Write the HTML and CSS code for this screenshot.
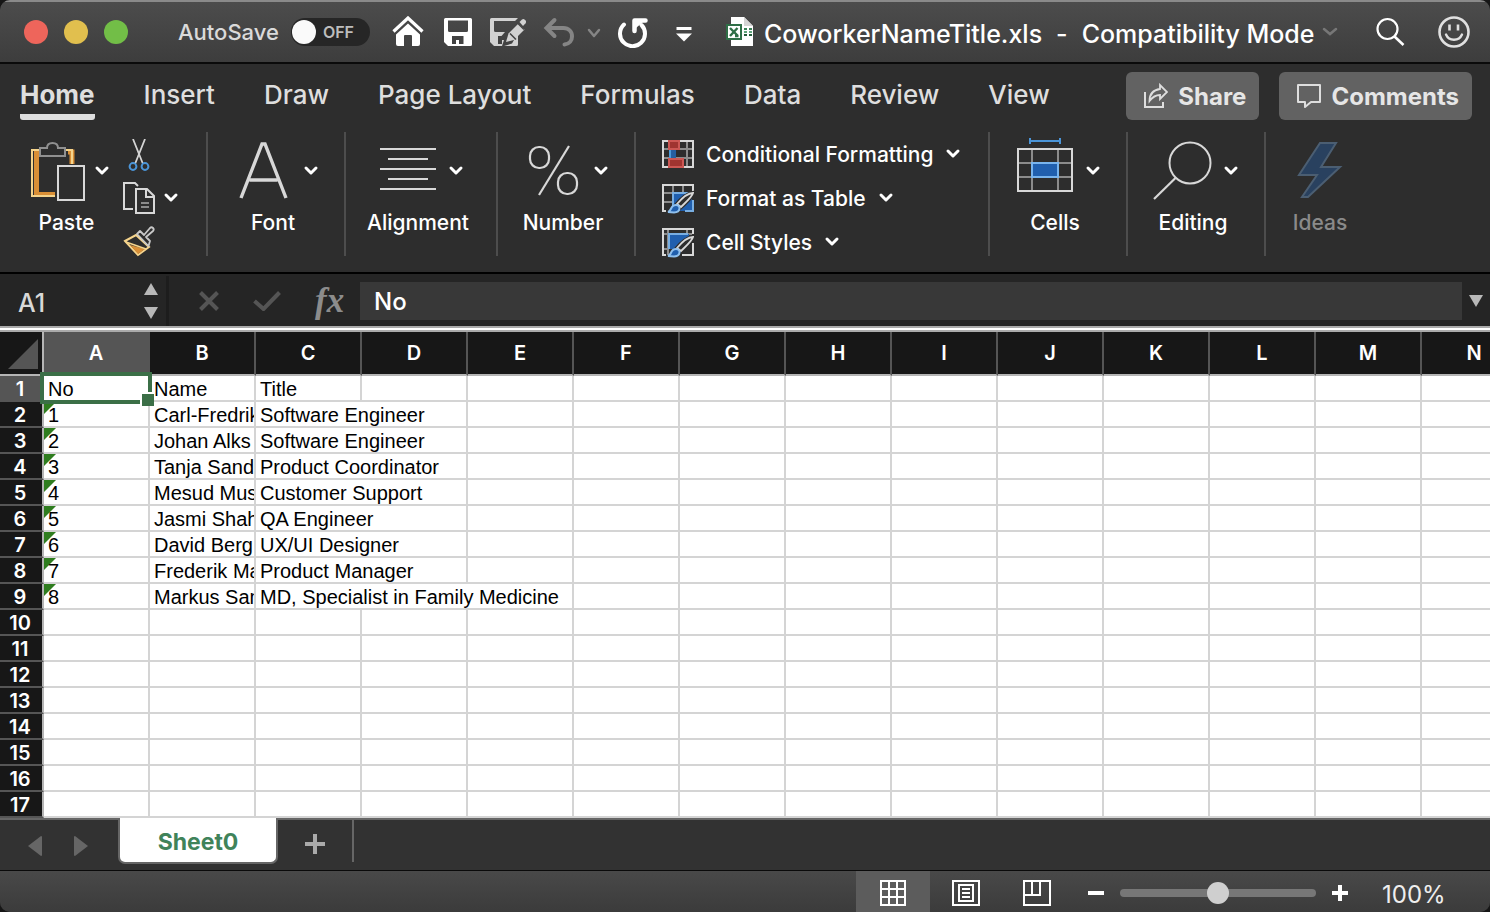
FILE: index.html
```html
<!DOCTYPE html>
<html lang="en">
<head>
<meta charset="utf-8">
<title>CoworkerNameTitle.xls</title>
<link rel="stylesheet" href="styles.css">
</head>
<body>
<div class="window">
  <header class="titlebar">
    <div class="lights">
      <button class="light close" aria-label="Close"></button>
      <button class="light minimize" aria-label="Minimize"></button>
      <button class="light zoom" aria-label="Zoom"></button>
    </div>
    <label class="autosave">AutoSave
      <span class="switch"><input type="checkbox" class="switch-input"><span class="switch-text">OFF</span></span>
    </label>
    <div class="quick">
      <button aria-label="Home"><svg width="32" height="32" viewBox="0 0 32 32"><path d="M1.500 15.500 16 2l14.500 13.500" fill="none" stroke="#fff" stroke-width="3.200"/><path fill-rule="evenodd" d="M16 7.500 28 18.500V28q0 2-2 2h-6V20q0-1-1-1h-6q-1 0-1 1v10H6q-2 0-2-2v-9.500z" fill="#fff"/></svg></button>
      <button aria-label="Save"><svg width="34" height="32" viewBox="0 0 34 32"><path fill="#fff" fill-rule="evenodd" d="M5.500 2h25q1.500 0 1.500 1.500v25q0 1.500-1.500 1.500H8l-4-4V3.500Q4 2 5.500 2zM8 4.500v10q0 1.500 1.500 1.500h17q1.500 0 1.500-1.500v-10zM12 20v8h4v-4h3v4h4.500v-8z"/></svg></button>
      <button aria-label="Save as"><svg width="36" height="32" viewBox="0 0 36 32"><path fill="#d2d2d2" fill-rule="evenodd" d="M1.500 2H28l-3 3H4v9.500Q4 16 5.500 16H15l-3.500 4H8v8h4v-4h2l-2 6H4l-4-4V3.500Q0 2 1.500 2zM28 17v11.500q0 1.500-1.500 1.500H14l8-2.500z"/><path d="M16 26l2.500-8.500L28.500 7.500l6 6L24 24z" fill="#d2d2d2"/><path d="M29.500 6 32 3.500q1.500-1 2.800.2l.8.900q1 1.300 0 2.600L33 10z" fill="#d2d2d2"/><path d="M27 6.500l7 7M20 17.500l6 6" stroke="#454545" stroke-width="1.500" fill="none"/></svg></button>
      <span class="pair">
        <button aria-label="Undo"><svg width="36" height="32" viewBox="0 0 36 32"><path d="M12.500 4 4.500 12l8 8M5 12h16.500c5 0 8.500 3.500 8.500 8.500 0 4-2.500 7.500-7.500 8" fill="none" stroke="#858585" stroke-width="4" stroke-linecap="round"/></svg></button>
        <button aria-label="Undo history"><svg width="16" height="32" viewBox="0 0 16 32"><path d="m3 14 5 6 5-6" fill="none" stroke="#858585" stroke-width="2.500" stroke-linecap="round" stroke-linejoin="round"/></svg></button>
      </span>
      <button aria-label="Redo"><svg width="32" height="32" viewBox="0 0 32 32"><path d="M6 8.500A12.500 12.500 0 1 0 23.500 9" fill="none" stroke="#fff" stroke-width="4" stroke-linecap="round"/><path d="M16.500 15V4.500H27.500" fill="none" stroke="#fff" stroke-width="4.500" stroke-linecap="round" stroke-linejoin="round"/><path d="M17 5h9l-8 7z" fill="#fff"/></svg></button>
      <button aria-label="Customize toolbar"><svg width="36" height="32" viewBox="0 0 36 32"><path d="M10.500 12.500h15" stroke="#fff" stroke-width="3"/><path d="M10 17.500h16l-8 8z" fill="#fff"/></svg></button>
      <svg width="36" height="32" viewBox="0 0 36 32"><path d="M13 1h13l9 9v20H13z" fill="#fff"/><path d="M26 1v9h9z" fill="#d5d5d5"/><path d="M26 12h3v2h-3zM31 12h3v2h-3z" fill="#3a8056"/><path d="M26 15h3v2h-3zM31 15h3v2h-3z" fill="#5fa57b"/><path d="M26 18h3v2h-3zM31 18h3v2h-3z" fill="#245c39"/><path d="M9 9h14v14H9z" fill="#fff" stroke="#2f6f47" stroke-width="2"/><path d="m12 12 8 8M19.500 12 12 20M17 20h3.500" stroke="#2f6f47" stroke-width="2.400"/></svg>
    </div>
    <h1 class="doc"><span>CoworkerNameTitle.xls</span><span>-</span><span>Compatibility Mode</span></h1>
    <svg width="16" height="32" viewBox="0 0 16 32"><path d="m2 13 6 5 6-5" fill="none" stroke="#777" stroke-width="2.500" stroke-linecap="round"/></svg>
    <div class="title-end">
      <button aria-label="Search"><svg width="32" height="32" viewBox="0 0 32 32"><circle cx="12.500" cy="13" r="10" fill="none" stroke="#fff" stroke-width="2.200"/><path d="m19.500 20.500 9 8.500" stroke="#fff" stroke-width="2.600"/></svg></button>
      <button aria-label="Feedback"><svg width="32" height="32" viewBox="0 0 32 32" fill="none" stroke="#e0e0e0"><circle cx="16" cy="16" r="14.500" stroke-width="2.600"/><path d="M11.500 8.500v6M20 8.500v6" stroke-width="2.600"/><path d="M8 18.500c3 7 13 7 16 0" stroke-width="2.400" stroke-linecap="round"/></svg></button>
    </div>
  </header>

  <section class="ribbon">
    <div class="ribbon-top">
      <nav class="tabs">
        <a href="#home" class="tab active">Home</a>
        <a href="#insert" class="tab">Insert</a>
        <a href="#draw" class="tab">Draw</a>
        <a href="#layout" class="tab">Page Layout</a>
        <a href="#formulas" class="tab">Formulas</a>
        <a href="#data" class="tab">Data</a>
        <a href="#review" class="tab">Review</a>
        <a href="#view" class="tab">View</a>
      </nav>
      <div class="actions">
        <button class="action"><svg width="24" height="26" viewBox="0 0 24 26" fill="none" stroke="#dedede" stroke-width="2"><path d="M1 9v15h18v-5"/><path d="M16 2v4C9 7 5.500 11 5.500 18c3-4 6-6 10.500-6v4l7-7z" stroke-width="1.800"/></svg>Share</button>
        <button class="action"><svg width="24" height="26" viewBox="0 0 24 26"><path d="M1 2h22v17H14l-6 5v-5H1z" fill="none" stroke="#dedede" stroke-width="2" stroke-linejoin="round"/></svg>Comments</button>
      </div>
    </div>
    <div class="groups">
      <div class="group clipboard">
        <button class="tool">
          <span class="tool-icons"><svg width="56" height="60" viewBox="0 0 56 60"><path d="M10 10H5.500v42.500H26M37 10h4v12" fill="none" stroke="#d98f36" stroke-width="5"/><path d="M9 8H1v46h25M35 8h6v14" fill="none" stroke="#f5d48c" stroke-width="2"/><path d="M9 6h7c0-3 2-5 5.500-5s5.500 2 5.500 5h7v8H9z" fill="#2d2d2d" stroke="#909090" stroke-width="2"/><path d="M24 22h5v38h-5z" fill="#2d2d2d"/><path d="M27 24h26v34H27z" fill="#2d2d2d" stroke="#d8d8d8" stroke-width="2"/></svg>
          <svg class="chev" width="16" height="12" viewBox="0 0 16 12"><path d="m3 3 5 5 5-5"/></svg></span>
          <span class="tool-label">Paste</span>
        </button>
        <div class="clip-tools">
          <button aria-label="Cut"><svg width="32" height="32" viewBox="0 0 32 32" fill="none"><path d="m10 0 10 25M22 0 12 25" stroke="#d4d4d4" stroke-width="1.800"/><circle cx="10" cy="27.500" r="3.400" stroke="#4b95d8" stroke-width="2"/><circle cx="22" cy="27.500" r="3.400" stroke="#4b95d8" stroke-width="2"/></svg></button>
          <span class="pair"><button aria-label="Copy"><svg width="32" height="34" viewBox="0 0 32 34" fill="none" stroke="#d8d8d8" stroke-width="2"><path d="M10 28H1V2h11l3 3"/><path d="M13 8h11l7 7v17H13z"/><path d="M23 8v8h8"/><path d="M18 22h8M18 26h8" stroke="#aaa" stroke-width="1.600"/></svg></button>
          <button aria-label="Copy options"><svg class="chev" width="16" height="12" viewBox="0 0 16 12"><path d="m3 3 5 5 5-5"/></svg></button></span>
          <button aria-label="Format painter"><svg width="32" height="32" viewBox="0 0 32 32"><path d="m2 16 11-6 13 12-11 8z" fill="#2d2d2d" stroke="#f5d48c" stroke-width="2"/><path d="m7 20 15 4-7 5z" fill="#d98f36"/><path d="m3 17 20 7" stroke="#f5d48c" stroke-width="1.600"/><path d="m14 9 3-3 4 4 6-7q1.500-1.500 3 0t0 3l-7 6 4 4-1.500 5z" fill="#2d2d2d" stroke="#c8c8c8" stroke-width="1.800" stroke-linejoin="round"/></svg></button>
        </div>
      </div>
      <div class="group">
        <button class="tool">
          <span class="tool-icons"><svg width="56" height="60" viewBox="0 0 56 60"><path d="M6 56 27 2h3l21 54M14.500 38h28" fill="none" stroke="#d8d8d8" stroke-width="3.400"/></svg>
          <svg class="chev" width="16" height="12" viewBox="0 0 16 12"><path d="m3 3 5 5 5-5"/></svg></span>
          <span class="tool-label">Font</span>
        </button>
      </div>
      <div class="group wide">
        <button class="tool">
          <span class="tool-icons"><svg width="56" height="60" viewBox="0 0 56 60"><path d="M0 7h56M8 17h40M0 27h56M8 37h40M0 47h56" stroke="#d8d8d8" stroke-width="2"/></svg>
          <svg class="chev" width="16" height="12" viewBox="0 0 16 12"><path d="m3 3 5 5 5-5"/></svg></span>
          <span class="tool-label">Alignment</span>
        </button>
      </div>
      <div class="group">
        <button class="tool">
          <span class="tool-icons"><svg width="56" height="60" viewBox="0 0 56 60" fill="none" stroke="#d8d8d8" stroke-width="2.200"><rect x="5" y="5" width="19" height="21" rx="9"/><rect x="33" y="31" width="19" height="21" rx="9"/><path d="M44 4 14 53"/></svg>
          <svg class="chev" width="16" height="12" viewBox="0 0 16 12"><path d="m3 3 5 5 5-5"/></svg></span>
          <span class="tool-label">Number</span>
        </button>
      </div>
      <div class="group styles">
        <button class="row-tool"><svg width="32" height="32" viewBox="0 0 32 32"><path d="M25 3v26M2 11h28M2 20h28M13 3v26" stroke="#8c8c8c" stroke-width="2"/><path d="M1 3h30v26H1z" fill="none" stroke="#d8d8d8" stroke-width="2"/><path d="M7 12h7v8H7z" fill="#265fa0"/><path d="M7 12h2v8H7z" fill="#4f9bd8"/><path d="M7 3h10v8H7zM7 21h14v8H7z" fill="#a03430" stroke="#cc5753" stroke-width="2"/></svg>Conditional Formatting<svg class="chev" width="16" height="12" viewBox="0 0 16 12"><path d="m3 3 5 5 5-5"/></svg></button>
        <button class="row-tool"><svg width="32" height="32" viewBox="0 0 32 32"><path d="M11 3v8M21 3v8M2 11h9M2 20h9" stroke="#8c8c8c" stroke-width="2"/><path d="M10 10h20v19H10z" fill="#205fae"/><path d="M11 28V11h16M31 18v11h-8" fill="none" stroke="#78aee2" stroke-width="2"/><path d="M4 29H1V3h30v7" fill="none" stroke="#d8d8d8" stroke-width="2"/><path d="M14 23c5-6 10-11 17-12-2 5-7 10-13 15z" fill="#2d2d2d" stroke="#2d2d2d" stroke-width="4"/><path d="M15 22c5-6 10-11 16-11-1 4-7 9-12 14z" fill="#2d2d2d" stroke="#d8d8d8" stroke-width="1.800"/><path d="M6 30c4-1 2-7 8-7 5 0 5 7-2 7.500z" fill="#205fae" stroke="#8fc0ee" stroke-width="2"/></svg>Format as Table<svg class="chev" width="16" height="12" viewBox="0 0 16 12"><path d="m3 3 5 5 5-5"/></svg></button>
        <button class="row-tool"><svg width="32" height="32" viewBox="0 0 32 32"><path d="M6 3v26M25 3v5M2 8h28M2 23h5" stroke="#8c8c8c" stroke-width="2"/><path d="M7 8h20v3L13 23H7z" fill="#205fae"/><path d="M7 23V8h19" fill="none" stroke="#78aee2" stroke-width="2"/><path d="M4 29H1V3h30v5M31 17v12H20" fill="none" stroke="#d8d8d8" stroke-width="2"/><path d="M14 23c5-6 10-11 17-12-2 5-7 10-13 15z" fill="#2d2d2d" stroke="#2d2d2d" stroke-width="4"/><path d="M15 22c5-6 10-11 16-11-1 4-7 9-12 14z" fill="#2d2d2d" stroke="#d8d8d8" stroke-width="1.800"/><path d="M6 30c4-1 2-7 8-7 5 0 5 7-2 7.500z" fill="#205fae" stroke="#8fc0ee" stroke-width="2"/></svg>Cell Styles<svg class="chev" width="16" height="12" viewBox="0 0 16 12"><path d="m3 3 5 5 5-5"/></svg></button>
      </div>
      <div class="group">
        <button class="tool">
          <span class="tool-icons"><svg class="spill" width="56" height="60" viewBox="0 0 56 60"><path d="M13-1h30M13-4v6M43-4v6" stroke="#4b95d8" stroke-width="2"/><path d="M15 8v41M41 8v41M1 21h54M1 35h54" stroke="#8c8c8c" stroke-width="2"/><path d="M1 7h54v42H1z" fill="none" stroke="#d8d8d8" stroke-width="2"/><path d="M15 21h26v14H15z" fill="#205fae" stroke="#78b4ee" stroke-width="2"/></svg>
          <svg class="chev" width="16" height="12" viewBox="0 0 16 12"><path d="m3 3 5 5 5-5"/></svg></span>
          <span class="tool-label">Cells</span>
        </button>
      </div>
      <div class="group">
        <button class="tool">
          <span class="tool-icons"><svg class="spill" width="56" height="60" viewBox="0 0 56 60"><circle cx="35" cy="21" r="20.500" fill="none" stroke="#d8d8d8" stroke-width="2"/><path d="M21 35.500-1 57" stroke="#d8d8d8" stroke-width="2.200"/></svg>
          <svg class="chev" width="16" height="12" viewBox="0 0 16 12"><path d="m3 3 5 5 5-5"/></svg></span>
          <span class="tool-label">Editing</span>
        </button>
      </div>
      <div class="group last">
        <button class="tool" disabled>
          <svg width="56" height="60" viewBox="0 0 56 60"><path d="M28 1h16L29 25h19L16 55H10l15-22H7z" fill="#29415f" stroke="#4b5e72" stroke-width="2"/></svg>
          <span class="tool-label center">Ideas</span>
        </button>
      </div>
    </div>
  </section>

  <section class="formula">
    <div class="namebox">
      <input class="cell-ref" aria-label="Name box" value="A1">
      <span class="steps"><button aria-label="Previous"><svg width="14" height="12" viewBox="0 0 14 12"><path d="m7 0 7 12H0z" fill="#b8b8b8"/></svg></button><button aria-label="Next"><svg width="14" height="12" viewBox="0 0 14 12"><path d="m7 12 7-12H0z" fill="#b8b8b8"/></svg></button></span>
    </div>
    <div class="formula-tools">
      <button aria-label="Cancel"><svg width="20" height="20" viewBox="0 0 20 20"><path d="m1.500 1.500 17 17M18.500 1.500l-17 17" stroke="#555" stroke-width="4"/></svg></button>
      <button aria-label="Enter"><svg width="28" height="20" viewBox="0 0 28 20"><path d="m1.500 10 9 8L26.500 1.500" fill="none" stroke="#555" stroke-width="4"/></svg></button>
      <button class="fx">fx</button>
    </div>
    <input class="formula-input" aria-label="Formula" value="No">
    <button class="expand" aria-label="Expand"><svg width="14" height="12" viewBox="0 0 14 12"><path d="m7 12 7-12H0z" fill="#b8b8b8"/></svg></button>
  </section>

  <main class="sheet">
    <table class="grid">
      <colgroup><col class="num-col"><col span="14" class="data-col"></colgroup>
      <thead><tr><th class="corner" aria-label="Select all"><svg width="30" height="30" viewBox="0 0 30 30"><path d="M30 0v30H0z" fill="#555"/></svg></th><th class="on">A</th><th>B</th><th>C</th><th>D</th><th>E</th><th>F</th><th>G</th><th>H</th><th>I</th><th>J</th><th>K</th><th>L</th><th>M</th><th>N</th></tr></thead>
      <tbody>
      <tr><th class="on">1</th><td class="selected">No</td><td>Name</td><td>Title</td><td><td><td><td><td><td><td><td><td><td><td></tr>
      <tr><th>2</th><td class="flag">1</td><td>Carl-Fredrik</td><td colspan="2">Software Engineer</td><td><td><td><td><td><td><td><td><td><td></tr>
      <tr><th>3</th><td class="flag">2</td><td>Johan Alks</td><td colspan="2">Software Engineer</td><td><td><td><td><td><td><td><td><td><td></tr>
      <tr><th>4</th><td class="flag">3</td><td>Tanja Sand</td><td colspan="2">Product Coordinator</td><td><td><td><td><td><td><td><td><td><td></tr>
      <tr><th>5</th><td class="flag">4</td><td>Mesud Mus</td><td colspan="2">Customer Support</td><td><td><td><td><td><td><td><td><td><td></tr>
      <tr><th>6</th><td class="flag">5</td><td>Jasmi Shah</td><td colspan="2">QA Engineer</td><td><td><td><td><td><td><td><td><td><td></tr>
      <tr><th>7</th><td class="flag">6</td><td>David Berg</td><td colspan="2">UX/UI Designer</td><td><td><td><td><td><td><td><td><td><td></tr>
      <tr><th>8</th><td class="flag">7</td><td>Frederik Ma</td><td colspan="2">Product Manager</td><td><td><td><td><td><td><td><td><td><td></tr>
      <tr><th>9</th><td class="flag">8</td><td>Markus San</td><td colspan="3">MD, Specialist in Family Medicine</td><td><td><td><td><td><td><td><td><td></tr>
      <tr><th>10</th><td><td><td><td><td><td><td><td><td><td><td><td><td><td></tr>
      <tr><th>11</th><td><td><td><td><td><td><td><td><td><td><td><td><td><td></tr>
      <tr><th>12</th><td><td><td><td><td><td><td><td><td><td><td><td><td><td></tr>
      <tr><th>13</th><td><td><td><td><td><td><td><td><td><td><td><td><td><td></tr>
      <tr><th>14</th><td><td><td><td><td><td><td><td><td><td><td><td><td><td></tr>
      <tr><th>15</th><td><td><td><td><td><td><td><td><td><td><td><td><td><td></tr>
      <tr><th>16</th><td><td><td><td><td><td><td><td><td><td><td><td><td><td></tr>
      <tr><th>17</th><td><td><td><td><td><td><td><td><td><td><td><td><td><td></tr>
      </tbody>
    </table>
  </main>

  <nav class="sheet-tabs">
    <div class="sheet-nav">
      <button aria-label="Previous sheet"><svg width="14" height="20" viewBox="0 0 14 20"><path d="M13 0q1 0 1 1v18q0 1-1 1L0 10z" fill="#666"/></svg></button>
      <button aria-label="Next sheet"><svg width="14" height="20" viewBox="0 0 14 20"><path d="M1 0Q0 0 0 1v18q0 1 1 1l13-10z" fill="#666"/></svg></button>
    </div>
    <a href="#sheet0" class="sheet-tab">Sheet0</a>
    <button class="add" aria-label="Add sheet"><svg width="20" height="20" viewBox="0 0 20 20"><path d="M10 0v20M0 10h20" stroke="#aaa" stroke-width="4"/></svg></button>
  </nav>

  <footer class="status">
    <button class="view on" aria-label="Normal view"><svg width="28" height="28" viewBox="0 0 28 28" fill="none" stroke="#fff" stroke-width="2"><path d="M2 2h24v24H2zM10 2v24M18 2v24M2 10h24M2 18h24"/></svg></button>
    <button class="view" aria-label="Page layout view"><svg width="28" height="28" viewBox="0 0 28 28" fill="none" stroke="#fff" stroke-width="2"><path d="M1 2h26v24H1zM7 6h14v16H7zM10 10h8M10 14h8M10 18h8"/></svg></button>
    <button class="view" aria-label="Page break view"><svg width="28" height="28" viewBox="0 0 28 28" fill="none" stroke="#fff" stroke-width="2"><path d="M1 2h26v24H1zM9 2v14M17 2v14M1 16h17"/></svg></button>
    <div class="zoomer">
      <button aria-label="Zoom out"><svg width="16" height="16" viewBox="0 0 16 16"><path d="M0 8h16" stroke="#fff" stroke-width="4"/></svg></button>
      <input type="range" class="slider" aria-label="Zoom" min="0" max="200" value="100">
      <button aria-label="Zoom in"><svg width="16" height="16" viewBox="0 0 16 16"><path d="M8 0v16M0 8h16" stroke="#fff" stroke-width="4"/></svg></button>
      <span class="percent">100%</span>
    </div>
  </footer>
</div>
</body>
</html>
```

FILE: styles.css
```css
* { box-sizing: border-box; }
body { margin: 0; background: #161616; font-family: Inter, "Liberation Sans", sans-serif; color: #fff; }
button { background: none; border: 0; padding: 0; margin: 0; font: inherit; color: inherit; display: flex; align-items: center; }
input { font: inherit; color: inherit; border: 0; background: none; margin: 0; padding: 0; min-width: 0; }
a { color: inherit; text-decoration: none; }
svg { display: block; flex: none; }
.window { min-height: 100vh; display: flex; flex-direction: column; border-radius: 10px; overflow: hidden; background: #2d2d2d; }

.titlebar { height: 64px; display: flex; align-items: center; padding: 0 20px 0 24px; background: linear-gradient(#4c4c4c, #3d3d3d); border-top: 2px solid #8a8a8a; border-bottom: 2px solid #0a0a0a; }
.lights { display: flex; gap: 16px; }
.light { width: 24px; height: 24px; border-radius: 50%; }
.close { background: #ee655b; }
.minimize { background: #e1bf4e; }
.zoom { background: #72be47; }
.autosave { display: flex; align-items: center; gap: 12px; margin-left: 50px; width: 192px; font-size: 22px; font-weight: 500; color: #dadada; }
.switch { position: relative; width: 80px; height: 28px; border-radius: 14px; background: #262626; display: flex; align-items: center; justify-content: flex-end; padding-right: 16px; }
.switch-input { position: absolute; inset: 0; appearance: none; border-radius: 14px; }
.switch-input::before { content: ""; position: absolute; left: 1px; top: 2px; width: 24px; height: 24px; border-radius: 50%; background: #fafafa; }
.switch-text { font-size: 16px; font-weight: 600; color: #bdbdbd; }
.quick { display: flex; gap: 16px; margin-left: 22px; }
.pair { display: flex; gap: 8px; align-items: center; }
.doc { display: flex; gap: 14px; margin: 0 8px 0 10px; padding-top: 3px; font-size: 25px; font-weight: 500; white-space: nowrap; }
.title-end { margin-left: auto; display: flex; gap: 31px; }

.ribbon { height: 210px; background: #2d2d2d; border-bottom: 2px solid #000; }
.ribbon-top { display: flex; justify-content: space-between; padding: 8px 18px 0 20px; }
.tabs { display: flex; gap: 49px; font-size: 26px; font-weight: 500; color: #dedede; white-space: nowrap; }
.tab { height: 48px; line-height: 46px; }
.tab.active { font-weight: 700; border-bottom: 6px solid #dedede; border-radius: 3px; }
.actions { display: flex; gap: 20px; }
.action { height: 48px; padding: 0 13px 0 18px; gap: 10px; border-radius: 6px; background: #626262; color: #e6e6e6; font-size: 24px; font-weight: 700; }
.groups { display: flex; margin-top: 12px; height: 124px; font-size: 21px; font-weight: 500; }
.group { width: 138px; border-right: 2px solid #4d4d4d; padding: 10px 0 0 2px; display: flex; justify-content: center; align-items: flex-start; }
.group.wide { width: 152px; }
.group.clipboard { width: 208px; padding: 10px 24px 0 31px; justify-content: flex-start; gap: 13px; }
.clipboard .tool-icons { gap: 7px; }
.group.styles { width: 354px; flex-direction: column; justify-content: flex-start; padding: 6px 0 0 26px; gap: 12px; }
.group.last { border: 0; width: 106px; }
.tool { flex-direction: column; align-items: center; }
.tool-icons { display: flex; gap: 12px; padding-bottom: 9px; }
.tool-icons .chev { margin-top: 23px; }
.tool-label { line-height: 24px; text-align: center; margin-right: 8px; white-space: nowrap; }
.tool-label.center { margin: 9px 0 0; }
.tool:disabled { color: #8a8a8a; }
.chev { fill: none; stroke: #fff; stroke-width: 3; stroke-linecap: round; stroke-linejoin: round; }
.spill { overflow: visible; }
.clip-tools { display: flex; flex-direction: column; gap: 10px; margin-top: -3px; }
.row-tool { gap: 12px; height: 32px; white-space: nowrap; }

.formula { height: 52px; display: flex; align-items: center; padding-top: 2px; background: #252525; }
.namebox { width: 169px; height: 50px; flex: none; display: flex; align-items: center; padding: 0 8px 0 18px; border-right: 3px solid #1d1d1d; }
.cell-ref { flex: 1; font-size: 25px; font-weight: 500; color: #d8d8d8; padding-top: 4px; }
.steps { display: flex; flex-direction: column; gap: 12px; }
.formula-tools { display: flex; align-items: center; width: 191px; flex: none; padding-left: 30px; gap: 34px; }
.fx { font-family: "Liberation Serif", serif; font-style: italic; font-weight: 700; font-size: 35px; line-height: 40px; color: #8c8c8c; }
.formula-input { flex: 1; height: 38px; background: #383838; padding-left: 14px; font-size: 24px; font-weight: 500; }
.expand { width: 28px; justify-content: center; }

.sheet { flex: 1; overflow: hidden; background: #fff; border-top: 6px double #aaa; color: #000; }
.grid { table-layout: fixed; border-collapse: separate; border-spacing: 0; width: 1528px; font-family: "Liberation Sans", Arial, sans-serif; font-size: 20px; }
.num-col { width: 44px; }
.data-col { width: 106px; }
.grid th { background: #171717; color: #fff; padding: 0; font-weight: 700; }
.grid thead th { height: 44px; border-right: 2px solid #555; border-bottom: 2px solid #b5b5b5; font-family: Inter, sans-serif; font-weight: 600; }
.grid thead .corner { border-right-color: #b5b5b5; padding-left: 8px; padding-top: 2px; }
.grid tbody th { height: 26px; border-right: 2px solid #b5b5b5; border-bottom: 2px solid #555; line-height: 22px; font-family: Inter, sans-serif; font-weight: 600; padding: 2px 2px 0 0; }
.grid th.on { background: #555; }
.grid td { height: 26px; line-height: 22px; padding: 2px 0 0 4px; border-right: 2px solid #d4d4d4; border-bottom: 2px solid #d4d4d4; white-space: nowrap; overflow: hidden; }
.grid td.flag { background: linear-gradient(135deg, #2f7d1f 8px, transparent 9px); }
.grid td.selected { position: relative; overflow: visible; }
.selected::before { content: ""; position: absolute; inset: -4px; border: 4px solid #3b6f47; }
.selected::after { content: ""; position: absolute; right: -6px; bottom: -6px; width: 12px; height: 12px; background: #3b6f47; border: solid #fff; border-width: 2px 0 0 2px; }

.sheet-tabs { height: 52px; display: flex; align-items: flex-start; background: #323232; border-top: 2px solid #666; }
.sheet-nav { display: flex; gap: 32px; width: 118px; padding: 16px 0 0 28px; }
.sheet-tab { width: 160px; height: 46px; margin-top: -2px; line-height: 48px; text-align: center; font-size: 23px; font-weight: 700; color: #40835a; background: #fff; border: 2px solid #666; border-top: 0; border-radius: 0 0 7px 7px; }
.add { width: 76px; height: 42px; padding-top: 6px; justify-content: center; border-right: 2px solid #666; }

.status { height: 42px; display: flex; justify-content: flex-end; align-items: center; padding: 2px 46px 0 0; background: linear-gradient(#494949, #3b3b3b); border-top: 1px solid #0a0a0a; }
.view { width: 71px; height: 40px; justify-content: center; }
.view.on { width: 74px; height: 42px; margin-top: -2px; padding-top: 2px; background: #5c5c5c; }
.zoomer { display: flex; align-items: center; gap: 16px; margin-left: 16px; }
.slider { appearance: none; width: 196px; height: 22px; }
.slider::-webkit-slider-runnable-track { height: 8px; border-radius: 4px; background: #777; }
.slider::-webkit-slider-thumb { appearance: none; width: 22px; height: 22px; margin-top: -7px; border-radius: 50%; background: #cfcfcf; }
.percent { margin-left: 18px; padding-top: 3px; font-size: 24px; width: 62px; color: #eee; }
```
